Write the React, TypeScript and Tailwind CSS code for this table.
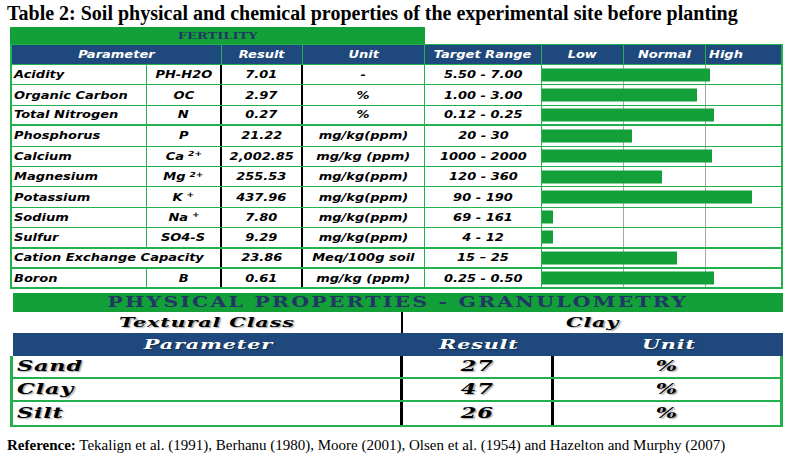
import React from "react"

type Row = {
  name: string
  sym?: React.ReactNode
  result: string
  unit: string
  range: string
  bar: number
  thick?: boolean
}

const sup = (base: string, s: string) => (
  <>
    {base}
    <sup className="text-[7px] ml-[3px]">{s}</sup>
  </>
)

const rows: Row[] = [
  { name: "Acidity", sym: "PH-H2O", result: "7.01", unit: "-", range: "5.50 - 7.00", bar: 168 },
  { name: "Organic Carbon", sym: "OC", result: "2.97", unit: "%", range: "1.00 - 3.00", bar: 155 },
  { name: "Total Nitrogen", sym: "N", result: "0.27", unit: "%", range: "0.12 - 0.25", bar: 172, thick: true },
  { name: "Phosphorus", sym: "P", result: "21.22", unit: "mg/kg(ppm)", range: "20 - 30", bar: 90 },
  { name: "Calcium", sym: sup("Ca", "2+"), result: "2,002.85", unit: "mg/kg (ppm)", range: "1000 - 2000", bar: 170 },
  { name: "Magnesium", sym: sup("Mg", "2+"), result: "255.53", unit: "mg/kg(ppm)", range: "120 - 360", bar: 120 },
  { name: "Potassium", sym: sup("K", "+"), result: "437.96", unit: "mg/kg(ppm)", range: "90 - 190", bar: 210 },
  { name: "Sodium", sym: sup("Na", "+"), result: "7.80", unit: "mg/kg(ppm)", range: "69 - 161", bar: 11 },
  { name: "Sulfur", sym: "SO4-S", result: "9.29", unit: "mg/kg(ppm)", range: "4 - 12", bar: 11, thick: true },
  { name: "Cation Exchange Capacity", result: "23.86", unit: "Meq/100g soil", range: "15 – 25", bar: 135, thick: true },
  { name: "Boron", sym: "B", result: "0.61", unit: "mg/kg (ppm)", range: "0.25 - 0.50", bar: 172, thick: true },
]

const grain = [
  { name: "Sand", result: "27" },
  { name: "Clay", result: "47" },
  { name: "Silt", result: "26" },
]

// stretched cell text, like the pasted spreadsheet
function T({ children, left }: { children: React.ReactNode; left?: boolean }) {
  return <span className={`inline-block scale-x-[1.3] whitespace-nowrap ${left ? "origin-left" : "origin-center"}`}>{children}</span>
}

function B({ children, left }: { children: React.ReactNode; left?: boolean }) {
  return (
    <span
      className={`inline-block scale-x-[1.6] whitespace-nowrap tracking-[0.5px] [text-shadow:1px_1px_1px_rgba(0,0,0,0.35)] ${left ? "origin-left" : "origin-center"}`}
    >
      {children}
    </span>
  )
}

export default function App() {
  return (
    <div className="w-[792px] h-[467px] bg-white overflow-hidden">
      {/* Title */}
      <div className="h-[27px] pl-[7px] pt-[2px] font-['Liberation_Serif',serif] font-bold text-[20px] leading-[23px] text-black whitespace-nowrap">
        Table 2: Soil physical and chemical properties of the experimental site before planting
      </div>

      {/* Fertility table */}
      <div className="ml-[10px] w-[773px] font-['DejaVu_Sans',sans-serif] font-bold italic text-[10px] text-black">
        <div className="w-[415px] h-[17px] bg-[#14a038] flex items-center justify-center font-['DejaVu_Serif',serif] not-italic text-[#1f3864]">
          <T>FERTILITY</T>
        </div>

        <div className="flex h-[21px] bg-[#1f497d] text-white border-y border-l-2 border-[#22b14c]">
          {[
            ["Parameter", "w-[210px]"],
            ["Result", "w-[81px]"],
            ["Unit", "w-[122px]"],
            ["Target Range", "w-[117px]"],
            ["Low", "w-[82px]"],
            ["Normal", "w-[82px]"],
          ].map(([t, w]) => (
            <div key={t} className={`${w} shrink-0 flex items-center justify-center border-r border-[#22b14c]`}>
              <T>{t}</T>
            </div>
          ))}
          <div className="flex-1 flex items-center pl-[3px] border-r-2 border-[#22b14c]">
            <T left>High</T>
          </div>
        </div>

        <div className="border-l-2 border-[#22b14c]">
          {rows.map((r) => (
            <div
              key={r.name}
              className={`flex h-[20.4px] border-[#22b14c] ${r.thick ? "border-b-2" : "border-b"}`}
            >
              {r.sym ? (
                <>
                  <div className="w-[135px] shrink-0 flex items-center pl-[2px] border-r border-[#22b14c]">
                    <T left>{r.name}</T>
                  </div>
                  <div className="w-[75px] shrink-0 flex items-center justify-center border-r-2 border-black">
                    <T>{r.sym}</T>
                  </div>
                </>
              ) : (
                <div className="w-[210px] shrink-0 flex items-center pl-[2px] border-r-2 border-black">
                  <T left>{r.name}</T>
                </div>
              )}
              <div className="w-[81px] shrink-0 flex items-center justify-center border-r-2 border-black">
                <T>{r.result}</T>
              </div>
              <div className="w-[122px] shrink-0 flex items-center justify-center border-r border-[#22b14c]">
                <T>{r.unit}</T>
              </div>
              <div className="w-[117px] shrink-0 flex items-center justify-center border-r border-[#22b14c]">
                <T>{r.range}</T>
              </div>
              <div className="relative flex-1 flex border-r-2 border-[#22b14c]">
                <div className="w-[82px] border-r border-[#a6a6a6]" />
                <div className="w-[82px] border-r border-[#a6a6a6]" />
                <div
                  className="absolute left-0 top-1/2 -translate-y-1/2 h-[13px] bg-[#14a038]"
                  style={{ width: r.bar }}
                />
              </div>
            </div>
          ))}
        </div>
      </div>

      {/* Physical properties */}
      <div className="mt-[4px] font-['DejaVu_Serif',serif] font-bold text-black">
        <div className="ml-[13px] w-[770px] h-[19px] bg-[#14a038] flex items-center justify-center text-[14px] text-[#1f3864]">
          <span className="inline-block scale-x-[1.46] tracking-[1.5px] whitespace-nowrap">PHYSICAL PROPERTIES - GRANULOMETRY</span>
        </div>

        <div className="ml-[13px] w-[770px] h-[21px] flex italic text-[13px]">
          <div className="w-[390px] shrink-0 flex items-center justify-center border-r-2 border-black">
            <B>Textural Class</B>
          </div>
          <div className="flex-1 flex items-center justify-center">
            <B>Clay</B>
          </div>
        </div>

        <div className="ml-[13px] w-[770px] h-[23px] flex italic text-[13px] text-white bg-[#1f497d]">
          <div className="w-[390px] shrink-0 flex items-center justify-center">
            <B>Parameter</B>
          </div>
          <div className="w-[151px] shrink-0 flex items-center justify-center">
            <B>Result</B>
          </div>
          <div className="flex-1 flex items-center justify-center">
            <B>Unit</B>
          </div>
        </div>

        <div className="ml-[10px] w-[773px] border-l-[3px] border-r-[3px] border-b-2 border-[#22b14c] italic text-[14px]">
          {grain.map((g, i) => (
            <div key={g.name} className={`flex h-[23px] ${i < 2 ? "border-b-2 border-[#22b14c]" : ""}`}>
              <div className="w-[390px] shrink-0 flex items-center pl-[4px] border-r-[3px] border-black">
                <B left>{g.name}</B>
              </div>
              <div className="w-[151px] shrink-0 flex items-center justify-center border-r-[3px] border-black">
                <B>{g.result}</B>
              </div>
              <div className="flex-1 flex items-center justify-center">
                <B>%</B>
              </div>
            </div>
          ))}
        </div>
      </div>

      {/* Sources */}
      <div className="mt-[10px] pl-[7px] font-['Liberation_Serif',serif] text-[15px] leading-[16px] text-black whitespace-nowrap">
        <span className="font-bold">Reference:</span> Tekalign et al. (1991), Berhanu (1980), Moore (2001), Olsen et al. (1954) and Hazelton and Murphy (2007)
      </div>
    </div>
  )
}
